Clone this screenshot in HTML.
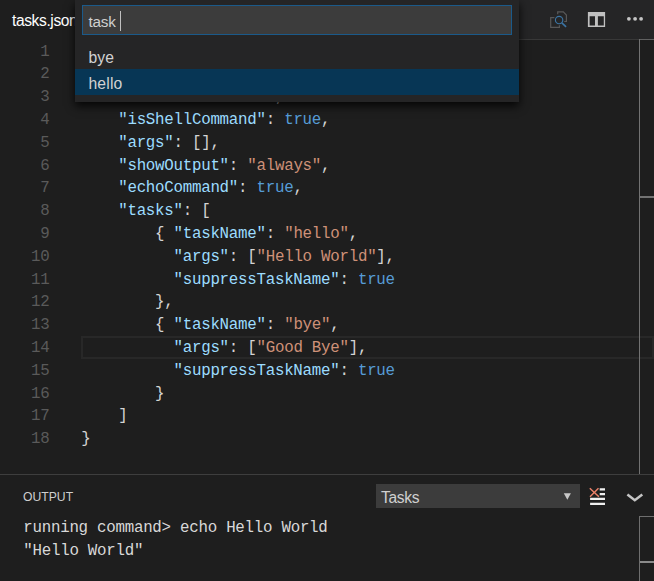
<!DOCTYPE html>
<html><head><meta charset="utf-8">
<style>
html,body{margin:0;padding:0;}
body{width:654px;height:581px;background:#1e1e1e;overflow:hidden;position:relative;font-family:"Liberation Sans",sans-serif;color:#d4d4d4;}
div,span{box-sizing:border-box;}
#tabbar{position:absolute;left:0;top:0;width:654px;height:39px;background:#252526;}
#tabline{position:absolute;left:140px;top:39px;width:500px;height:1px;background:#383838;}
#tab{position:absolute;left:0;top:0;width:140px;height:39px;background:#1e1e1e;}
#tabtext{position:absolute;left:12px;top:11.2px;color:#fff;font-size:15.6px;line-height:20px;letter-spacing:-0.4px;white-space:nowrap;}
.ln{position:absolute;left:0;width:49.5px;text-align:right;color:#5a5a5a;font-family:"Liberation Mono",monospace;font-size:15.8px;letter-spacing:-0.26px;line-height:23px;height:23px;}
.cl{position:absolute;left:81.3px;white-space:pre;color:#d4d4d4;font-family:"Liberation Mono",monospace;font-size:15.8px;letter-spacing:-0.26px;line-height:23px;height:23px;}
.k{color:#9cdcfe}.s{color:#ce9178}.b{color:#569cd6}
#curline{position:absolute;left:81.3px;top:336.2px;width:573px;height:22.4px;border:2.4px solid #282828;}
#vline{position:absolute;left:639px;top:39px;width:1.4px;height:435px;background:#727272;}
#vtop{position:absolute;left:640px;top:39px;width:14px;height:1px;background:#606060;}
#hline{position:absolute;left:640px;top:195.5px;width:14px;height:2px;background:#727272;}
#panelborder{position:absolute;left:0;top:474px;width:654px;height:1px;background:#3e3e3e;}
#ptitle{position:absolute;left:23px;top:489.1px;font-size:12.2px;color:#cfcfcf;line-height:16px;}
#select{position:absolute;left:376px;top:484px;width:204px;height:24px;background:#3c3c3c;}
#seltext{position:absolute;left:381px;top:488.4px;color:#d0d0d0;font-size:15.6px;line-height:20px;letter-spacing:-0.3px;}
.out{position:absolute;left:23.3px;white-space:pre;color:#d8d8d8;font-family:"Liberation Mono",monospace;font-size:15.8px;letter-spacing:-0.26px;line-height:23px;}
#quick{position:absolute;left:75px;top:0;width:444px;height:101.5px;background:#252526;box-shadow:0 4px 9px rgba(0,0,0,0.85);}
#qinput{position:absolute;left:7px;top:5px;width:430px;height:30px;background:#3c3c3c;border:1px solid #1b5a8a;}
#qtext{position:absolute;left:13.5px;top:12px;color:#d0d0d0;font-size:15.3px;line-height:20px;letter-spacing:-0.2px;}
#qcursor{position:absolute;left:45px;top:10.5px;width:1.2px;height:20px;background:#c0c0c0;}
.qrow{position:absolute;left:0;width:444px;height:26px;}
.qi{position:absolute;left:13.5px;letter-spacing:0.15px;font-size:15.7px;line-height:20px;color:#d2d2d2;white-space:nowrap;}
svg{position:absolute;overflow:visible;}
#sb1{position:absolute;left:639.2px;top:515.5px;width:16px;height:70px;border:1.3px solid #6e6e6e;}
#sb2{position:absolute;left:640px;top:561px;width:14px;height:2.2px;background:#8a8a8a;}
</style></head><body>
<div id="tabbar"><div id="tab"></div><div id="tabtext">tasks.json</div></div>
<div id="tabline"></div>
<svg style="left:540px;top:4px" width="40" height="32" viewBox="0 0 40 32">
<path d="M17.7 10.2 V7.8 H23.3 L26.4 11 V17.5 H24.2" stroke="#585858" fill="none" stroke-width="1.2"/>
<path d="M14.4 13.7 H10.7 V23.3 H19.4 V21.2" stroke="#585858" fill="none" stroke-width="1.2"/>
<circle cx="19.1" cy="16" r="3.7" stroke="#3b74a3" stroke-width="1.15" fill="none"/>
<path d="M21.8 18.8 L26.1 22.9" stroke="#3b74a3" stroke-width="1.6"/>
</svg>
<svg style="left:580px;top:4px" width="74" height="32" viewBox="0 0 74 32">
<path d="M7.9 8.1 H25.1 V23 H7.9 Z M9.6 12.2 V21.5 H15 V12.2 Z M17.9 12.2 V21.5 H23.8 V12.2 Z" fill="#c0c0c0" fill-rule="evenodd"/>
<circle cx="48.9" cy="14.8" r="1.9" fill="#c5c5c5"/><circle cx="55.1" cy="14.8" r="1.9" fill="#c5c5c5"/><circle cx="61.1" cy="14.8" r="1.9" fill="#c5c5c5"/>
</svg>
<div id="curline"></div>
<div id="code">
<div class="ln" style="top:40.50px">1</div>
<div class="cl" style="top:40.50px">{</div>
<div class="ln" style="top:63.30px">2</div>
<div class="cl" style="top:63.30px">    <span class="k">"version"</span>: <span class="s">"0.1.0"</span>,</div>
<div class="ln" style="top:86.10px">3</div>
<div class="cl" style="top:86.10px">    <span class="k">"command"</span>: <span class="s">"echo"</span>,</div>
<div class="ln" style="top:108.90px">4</div>
<div class="cl" style="top:108.90px">    <span class="k">"isShellCommand"</span>: <span class="b">true</span>,</div>
<div class="ln" style="top:131.70px">5</div>
<div class="cl" style="top:131.70px">    <span class="k">"args"</span>: [],</div>
<div class="ln" style="top:154.50px">6</div>
<div class="cl" style="top:154.50px">    <span class="k">"showOutput"</span>: <span class="s">"always"</span>,</div>
<div class="ln" style="top:177.30px">7</div>
<div class="cl" style="top:177.30px">    <span class="k">"echoCommand"</span>: <span class="b">true</span>,</div>
<div class="ln" style="top:200.10px">8</div>
<div class="cl" style="top:200.10px">    <span class="k">"tasks"</span>: [</div>
<div class="ln" style="top:222.90px">9</div>
<div class="cl" style="top:222.90px">        { <span class="k">"taskName"</span>: <span class="s">"hello"</span>,</div>
<div class="ln" style="top:245.70px">10</div>
<div class="cl" style="top:245.70px">          <span class="k">"args"</span>: [<span class="s">"Hello World"</span>],</div>
<div class="ln" style="top:268.50px">11</div>
<div class="cl" style="top:268.50px">          <span class="k">"suppressTaskName"</span>: <span class="b">true</span></div>
<div class="ln" style="top:291.30px">12</div>
<div class="cl" style="top:291.30px">        },</div>
<div class="ln" style="top:314.10px">13</div>
<div class="cl" style="top:314.10px">        { <span class="k">"taskName"</span>: <span class="s">"bye"</span>,</div>
<div class="ln" style="top:336.90px">14</div>
<div class="cl" style="top:336.90px">          <span class="k">"args"</span>: [<span class="s">"Good Bye"</span>],</div>
<div class="ln" style="top:359.70px">15</div>
<div class="cl" style="top:359.70px">          <span class="k">"suppressTaskName"</span>: <span class="b">true</span></div>
<div class="ln" style="top:382.50px">16</div>
<div class="cl" style="top:382.50px">        }</div>
<div class="ln" style="top:405.30px">17</div>
<div class="cl" style="top:405.30px">    ]</div>
<div class="ln" style="top:428.10px">18</div>
<div class="cl" style="top:428.10px">}</div>
</div><!--endcode-->
<div id="vline"></div><div id="vtop"></div><div id="hline"></div>
<div id="panelborder"></div>
<div id="ptitle">OUTPUT</div>
<div id="select"></div><div id="seltext">Tasks</div>
<svg style="left:555px;top:480px" width="99" height="35" viewBox="0 0 99 35">
<path d="M8.8 13.3 H15.9 L12.35 19.7 Z" fill="#c8c8c8"/>
<path d="M44.7 8.3 H50 V10.5 H44.7 Z M44.7 13 H50 V15.2 H44.7 Z M35.1 17.8 H50 V20 H35.1 Z M35.1 22.7 H50 V24.9 H35.1 Z" fill="#efefef"/>
<path d="M34.8 8.3 L43.9 16.7 M43.5 8.3 L35 16.7" stroke="#ea8169" stroke-width="1.5" fill="none"/>
<path d="M72.4 14.4 L79.8 20.2 L87.3 14.4" stroke="#c5c5c5" stroke-width="2.5" fill="none"/>
</svg>
<div id="sb1"></div><div id="sb2"></div>
<div class="out" style="top:517.3px">running command&gt; echo Hello World</div>
<div class="out" style="top:540.1px">"Hello World"</div>
<div id="quick">
<div id="qinput"></div><div id="qtext">task</div><div id="qcursor"></div>
<div class="qrow" style="top:42.6px"></div><div class="qi" style="top:47.6px">bye</div>
<div class="qrow" style="top:69px;background:#073655"></div><div class="qi" style="top:74.1px">hello</div>
</div>
</body></html>
